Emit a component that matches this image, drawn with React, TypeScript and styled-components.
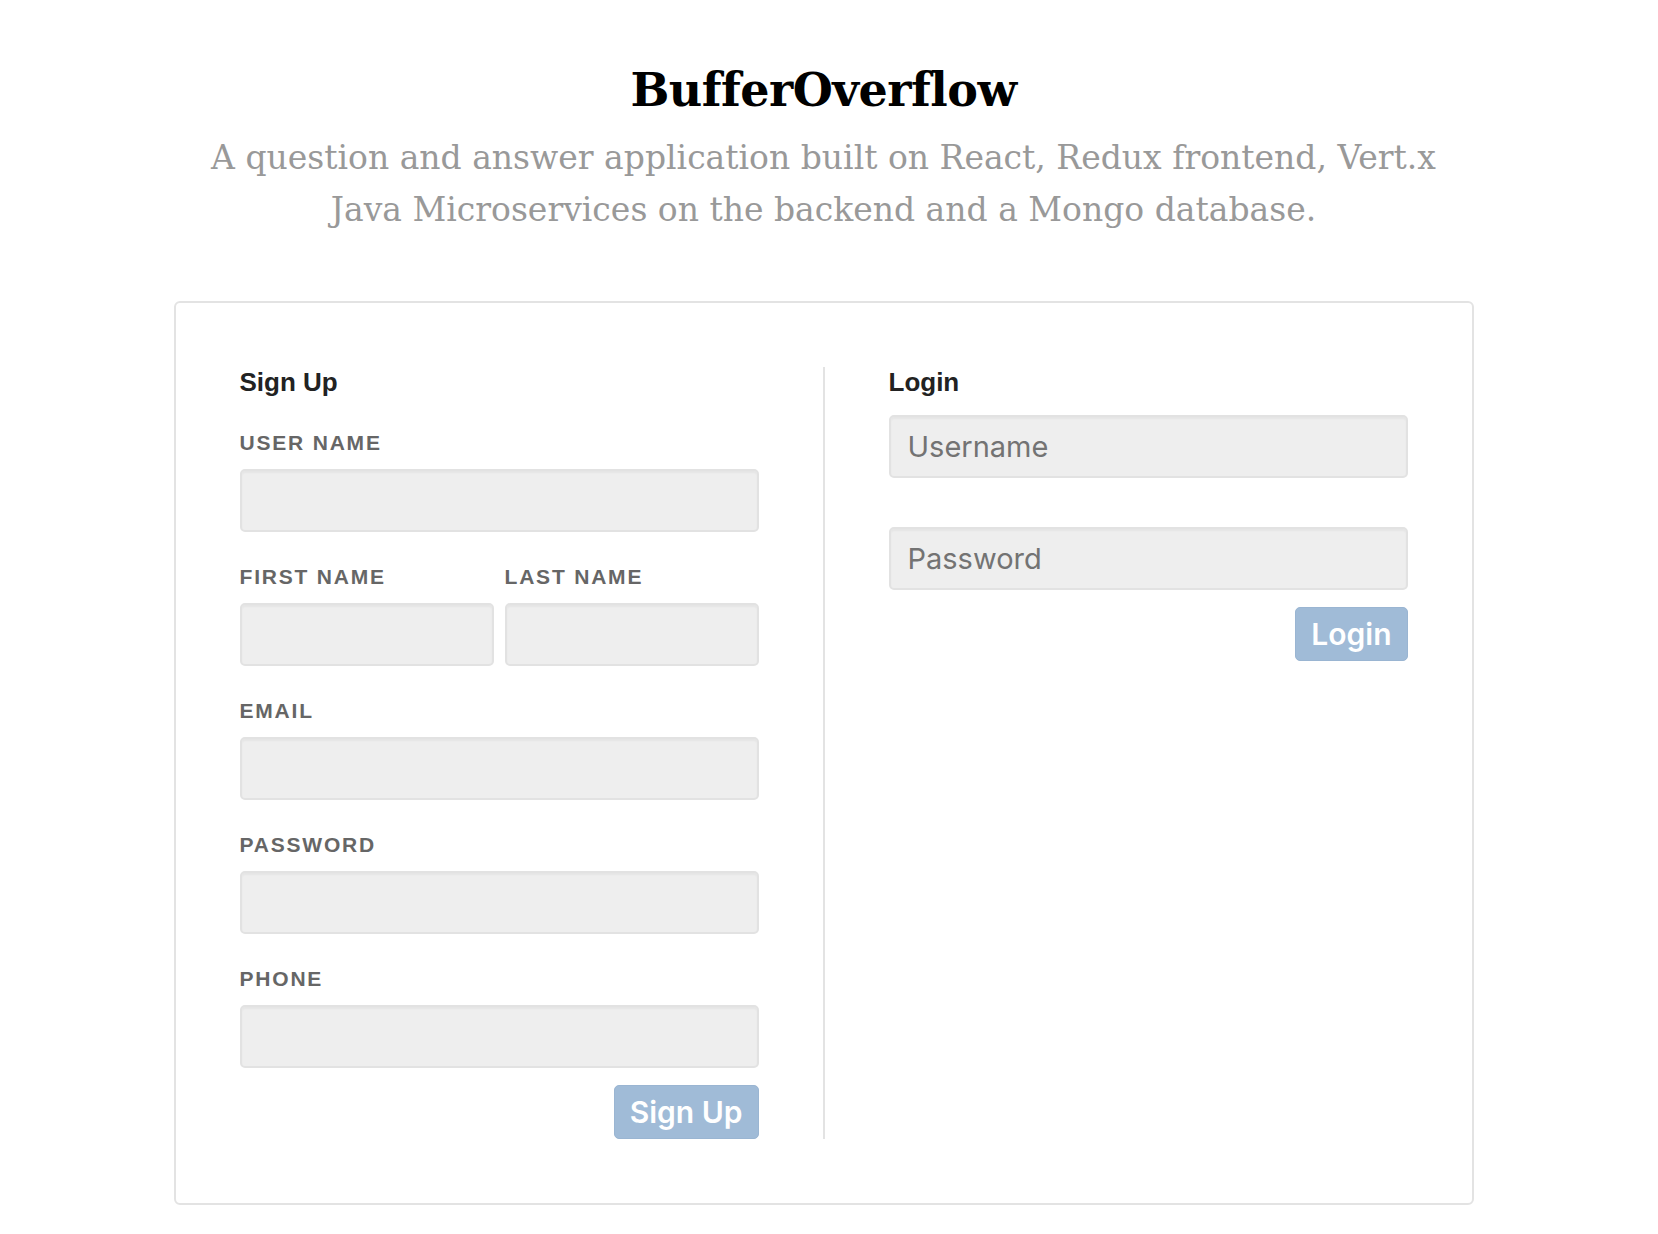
import React from "react";
import styled, { createGlobalStyle } from "styled-components";

const GlobalStyle = createGlobalStyle`
  html, body {
    margin: 0;
    padding: 0;
    background: #ffffff;
  }
  body {
    font-family: "Liberation Sans", Arial, sans-serif;
    color: #222;
  }
  * { box-sizing: border-box; }
`;

const Page = styled.div`
  width: 1647px;
  padding-top: 65px;
  display: flex;
  flex-direction: column;
  align-items: center;
`;

const Title = styled.h1`
  margin: 0;
  font-family: "DejaVu Serif", Georgia, serif;
  font-weight: 700;
  font-size: 46px;
  line-height: 50px;
  color: #000;
  text-align: center;
  letter-spacing: -0.5px;
`;

const Subtitle = styled.p`
  margin: 17px 0 0;
  font-family: "DejaVu Serif", Georgia, serif;
  font-weight: 400;
  font-size: 33px;
  line-height: 52px;
  color: #999;
  text-align: center;
  letter-spacing: 0;
`;

const Card = styled.div`
  margin-top: 65px;
  width: 1300px;
  border: 2px solid #e3e3e3;
  border-radius: 6px;
  padding: 64px;
  display: grid;
  grid-template-columns: 1fr 2px 1fr;
  column-gap: 64px;
`;

const Divider = styled.div`
  background: #e3e3e3;
`;

const Column = styled.div`
  display: flex;
  flex-direction: column;
`;

const Heading = styled.h2`
  margin: 0;
  font-size: 26px;
  line-height: 31px;
  font-weight: 700;
  color: #222;
`;

const Field = styled.div`
  display: flex;
  flex-direction: column;
  margin-top: 33px;
`;

const Label = styled.label`
  font-size: 21px;
  line-height: 24px;
  font-weight: 700;
  letter-spacing: 1.8px;
  color: #666;
  text-transform: uppercase;
  margin-bottom: 14px;
`;

const Input = styled.input`
  width: 100%;
  height: 63px;
  background: #eeeeee;
  border: 2px solid #e2e2e2;
  border-radius: 5px;
  box-shadow: inset 0 2px 2px rgba(0, 0, 0, 0.04);
  padding: 0 17px;
  font-family: Inter, "Liberation Sans", sans-serif;
  font-size: 29px;
  color: #333;
  outline: none;
  &::placeholder {
    color: #737373;
  }
`;

const NameRow = styled.div`
  display: grid;
  grid-template-columns: 1fr 1fr;
  column-gap: 11px;
`;

const ButtonRow = styled.div<{ $gap: number }>`
  display: flex;
  justify-content: flex-end;
  margin-top: ${(p) => p.$gap}px;
`;

const Button = styled.button`
  height: 54px;
  padding: 0 15px;
  background: #a0bbd7;
  border: 1px solid #9ab5d2;
  border-radius: 5px;
  color: #ffffff;
  font-family: Inter, "Liberation Sans", sans-serif;
  font-weight: 600;
  font-size: 30px;
  cursor: pointer;
`;

const LoginInput = styled(Input)<{ $gap: number }>`
  margin-top: ${(p) => p.$gap}px;
`;

export default function App() {
  return (
    <>
      <GlobalStyle />
      <Page>
        <Title>BufferOverflow</Title>
        <Subtitle>
          A question and answer application built on React, Redux frontend, Vert.x
          <br />
          Java Microservices on the backend and a Mongo database.
        </Subtitle>
        <Card>
          <Column>
            <Heading>Sign Up</Heading>
            <Field>
              <Label>User Name</Label>
              <Input type="text" />
            </Field>
            <NameRow>
              <Field>
                <Label>First Name</Label>
                <Input type="text" />
              </Field>
              <Field>
                <Label>Last Name</Label>
                <Input type="text" />
              </Field>
            </NameRow>
            <Field>
              <Label>Email</Label>
              <Input type="text" />
            </Field>
            <Field>
              <Label>Password</Label>
              <Input type="password" />
            </Field>
            <Field>
              <Label>Phone</Label>
              <Input type="text" />
            </Field>
            <ButtonRow $gap={17}>
              <Button>Sign Up</Button>
            </ButtonRow>
          </Column>
          <Divider />
          <Column>
            <Heading>Login</Heading>
            <LoginInput $gap={17} type="text" placeholder="Username" />
            <LoginInput $gap={49} type="password" placeholder="Password" />
            <ButtonRow $gap={17}>
              <Button>Login</Button>
            </ButtonRow>
          </Column>
        </Card>
      </Page>
    </>
  );
}
